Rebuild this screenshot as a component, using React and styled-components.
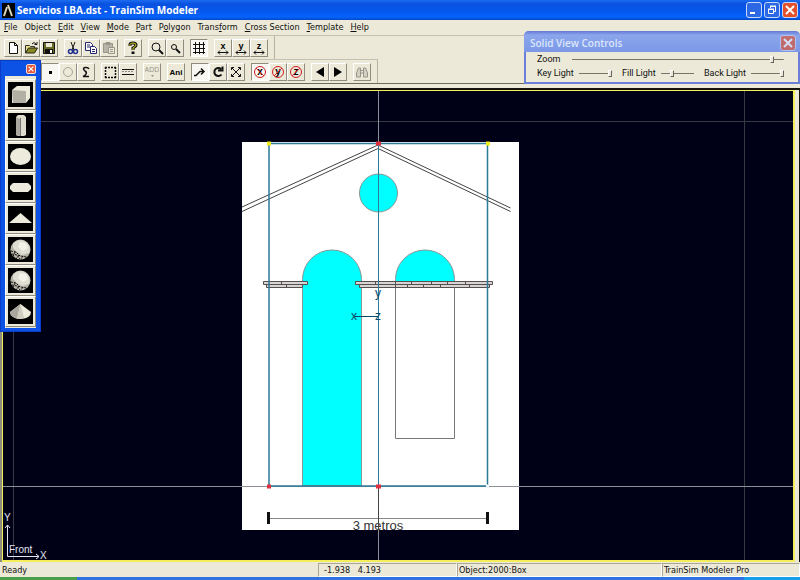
import React, { useState } from 'react';
import styled, { createGlobalStyle, css } from 'styled-components';

const GlobalStyle = createGlobalStyle`
	* {
		box-sizing: border-box;
	}

	body {
		margin: 0;
		background: #ece9d8;
		color: #111;
		font-family: 'DejaVu Sans Condensed', 'Liberation Sans', sans-serif;
		font-size: 9px;
		line-height: 12px;
	}

	button,
	input {
		margin: 0;
		padding: 0;
		border: 0;
		color: inherit;
		font: inherit;
	}
`;

const Window = styled.div`
	position: relative;
	display: flex;
	flex-direction: column;
	min-height: 100vh;
	overflow: hidden;
`;

const TitleBar = styled.header`
	display: flex;
	align-items: center;
	gap: 2px;
	height: 20px;
	padding: 0 2px;
	background: linear-gradient(to bottom, #1c6cf0, #0a52e0 20%, #0558ee 60%, #0564fb 85%, #0346c8);
`;

const WindowTitle = styled.h1`
	flex: 1;
	margin: 0;
	color: #ffffff;
	font-family: 'Open Sans', 'Liberation Sans', sans-serif;
	font-size: 10px;
	font-weight: 700;
	line-height: 16px;
	white-space: nowrap;
`;

const WindowButton = styled.button`
	display: flex;
	align-items: center;
	justify-content: center;
	width: 16px;
	height: 16px;
	border: 1px solid #c8d8f8;
	border-radius: 3px;
	background: ${props => (props.$close ? '#e2502c' : '#2c68e4')};
	opacity: ${props => (props.$faded ? 0.65 : 1)};
`;

const MenuBar = styled.nav`
	display: flex;
	gap: 7px;
	height: 16px;
	padding: 0 4px;
	border-bottom: 1px solid #c4c1b2;
`;

const MenuItem = styled.button`
	background: none;
	line-height: 15px;
	white-space: nowrap;
`;

const ToolBars = styled.div`
	display: flex;
	flex-direction: column;
	align-items: flex-start;
	border-bottom: 1px solid #6d6a5e;
`;

const ToolBar = styled.div`
	display: flex;
	align-items: center;
	gap: 6px;
	height: ${props => (props.$indent ? '24px' : '23px')};
	padding: 0 6px 0 ${props => (props.$indent ? '41px' : '4px')};
	border-top: ${props => (props.$indent ? '1px solid #c4c1b2' : '0')};
	border-right: 1px solid #b5b2a2;
`;

const ToolGroup = styled.div`
	display: flex;
`;

const ToolButton = styled.button`
	display: flex;
	align-items: center;
	justify-content: center;
	width: 18px;
	height: 18px;
	border: 1px solid;
	border-color: #ffffff #8f8c7e #8f8c7e #ffffff;
	background: #ece9d8;

	${props =>
		props.$pressed &&
		css`
			border-color: #8f8c7e #ffffff #ffffff #8f8c7e;
			background: #f8f7f2;
		`}
`;

const Workspace = styled.main`
	display: flex;
	flex: 1;
	margin-top: 4px;
	padding-right: 4px;
	border-top: 2px solid #15130c;
	border-left: 2px solid #8f8c7e;
	border-right: 1px solid #15130c;
`;

const Viewport = styled.div`
	position: relative;
	flex: 1;
	border: 2px solid #f4ee5c;
	border-width: 1px 2px 2px 1px;
	background: #000017;
`;

const Scene = styled.svg`
	position: absolute;
	inset: 0;
	width: 100%;
	height: 100%;
	font-family: 'Liberation Sans', sans-serif;
`;

const Palette = styled.aside`
	position: absolute;
	top: 60px;
	left: 0;
	padding: 0 4px 3px;
	border: 1px solid #0a3cc8;
	background: #0c52e4;
`;

const PaletteTitle = styled.div`
	display: flex;
	justify-content: flex-end;
	padding: 3px 0 2px;
`;

const PaletteClose = styled.button`
	display: flex;
	align-items: center;
	justify-content: center;
	width: 10px;
	height: 10px;
	border: 1px solid #f4dcd8;
	border-radius: 2px;
	background: #e0583c;
`;

const PaletteTools = styled.div`
	padding: 3px 0 1px;
	background: #ece9d8;
`;

const ShapeButton = styled.button`
	display: block;
	width: 31px;
	height: 31px;
	padding: 2px;
	border: 1px solid;
	border-color: #ffffff #8f8c7e #8f8c7e #ffffff;
	background: #ece9d8;

	svg {
		display: block;
		background: #000000;
	}
`;

const Dialog = styled.section`
	position: absolute;
	top: 31px;
	right: 0;
	width: 276px;
	height: 53px;
	border: 2px solid #6b7fd8;
	border-top: 0;
	border-radius: 5px 5px 0 0;
	background: #ece9d8;
	font-family: Roboto, 'Liberation Sans', sans-serif;
`;

const DialogTitle = styled.div`
	display: flex;
	align-items: center;
	justify-content: space-between;
	height: 21px;
	margin: 0 -2px;
	padding: 2px 4px 0 6px;
	border-radius: 5px 5px 0 0;
	background: linear-gradient(to bottom, #6378d4, #8ba6ec 20%, #7c98e6);
`;

const DialogHeading = styled.h2`
	margin: 0;
	color: #dce6fc;
	font-family: 'Open Sans', sans-serif;
	font-size: 10px;
	font-weight: 600;
`;

const DialogRow = styled.div`
	display: flex;
	align-items: center;
	justify-content: space-between;
	height: 14px;
	padding: 0 14px 0 11px;
`;

const SliderLabel = styled.label`
	display: flex;
	flex: ${props => (props.$fill ? '1' : 'none')};
	align-items: center;
	gap: ${props => (props.$fill ? '12px' : '5px')};
	white-space: nowrap;
`;

const Slider = styled.input`
	flex: ${props => (props.$fill ? '1' : 'none')};
	width: 33px;
	height: 9px;
	appearance: none;
	background: linear-gradient(#77756a, #77756a) center / 100% 1px no-repeat;

	&::-webkit-slider-thumb {
		width: 4px;
		height: 7px;
		appearance: none;
		border: 1px solid;
		border-color: #ffffff #66645a #66645a #ffffff;
		background: #ece9d8;
	}
`;

const StatusBar = styled.footer`
	display: grid;
	grid-template-columns: 318fr 139fr 205fr 138fr;
	height: 15px;
	padding-top: 1px;
`;

const StatusPane = styled.div`
	padding-left: ${props => (props.$coords ? '5px' : '1px')};
	border: 1px solid;
	border-color: ${props => (props.$flat ? 'transparent' : '#aaa797 #ffffff #ffffff #aaa797')};
	white-space: pre;
`;

const TaskBar = styled.div`
	height: 3px;
	background: linear-gradient(to right, #4aa04a 77px, #2f72e0 77px 93%, #18a0ee 93%);
`;

const Hotkey = styled.span`
	text-decoration: underline;
`;

// menu captions, with the position of the underlined letter
const menus = [
	['File', 0],
	['Object', -1],
	['Edit', 0],
	['View', 0],
	['Mode', 0],
	['Part', 0],
	['Polygon', 1],
	['Transform', 5],
	['Cross Section', 0],
	['Template', 0],
	['Help', 0]
];

const axisIcon = letter => (
	<>
		<text x="7" y="8" textAnchor="middle" fontSize="9" fontWeight="700">{letter}</text>
		<path d="M2 11.500h10M4 9.500l-2 2 2 2M10 9.500l2 2-2 2" fill="none" stroke="#111" />
	</>
);

const lockIcon = letter => (
	<>
		<text x="7" y="10" textAnchor="middle" fontSize="10" fontWeight="700">{letter}</text>
		<g fill="none" stroke="#d01c24">
			<circle cx="7" cy="7" r="5.500" />
			<path d={letter === 'x' ? 'M3 3l8 8' : 'M3 11l8-8'} />
		</g>
	</>
);

const icons = {
	new: <path d="M3.500 1.500h5l3 3v8h-8zM8.500 1.500v3h3" fill="#fff" stroke="#111" />,
	open: (
		<>
			<path d="M1.500 12V4.500h4l1 1h4V7" fill="#e8e080" stroke="#333" />
			<path d="M1.500 12l3-5h9l-3 5z" fill="#8a8a20" stroke="#222" />
			<path d="M8 3q2-3 4 0m1-2v2.500h-2.500" fill="none" stroke="#111" />
		</>
	),
	save: (
		<>
			<path d="M1.500 1.500h11v11h-11z" fill="#6a6a28" stroke="#111" />
			<path d="M4 2h6v4H4z" fill="#ece9d8" />
			<path d="M3 8h8v4H3z" fill="#111" />
			<path d="M8 9h2v3H8z" fill="#fff" />
		</>
	),
	cut: (
		<>
			<path d="M5 1l3 8M9 1L6 9" fill="none" stroke="#111" />
			<g fill="none" stroke="#20308c" strokeWidth="1.500">
				<circle cx="4.500" cy="10.500" r="2" />
				<circle cx="9.500" cy="10.500" r="2" />
			</g>
		</>
	),
	copy: (
		<g fill="#fff" stroke="#24246c">
			<path d="M1.500 1.500h5l2 2v6h-7zM3 4h3M3 6h3" />
			<path d="M6.500 5.500h4l2 2v5h-6zM8 8.500h3M8 10.500h3" />
		</g>
	),
	paste: (
		<g fill="#b8b5a8" stroke="#98958a">
			<path d="M1.500 2.500h9v9h-9zM4 1.500h4v2H4z" />
			<path d="M6.500 6.500h6v6h-6zM8 8.500h3M8 10.500h3" fill="#ece9d8" />
		</g>
	),
	help: (
		<>
			<path d="M4 5V3.500Q4 2 7 2t3 2q0 1.500-3 3v2" fill="none" stroke="#111" strokeWidth="3" />
			<path d="M4 5V3.500Q4 2 7 2t3 2q0 1.500-3 3v2" fill="none" stroke="#d8d020" />
			<path d="M5.500 10.500h3v2.500h-3z" fill="#111" />
		</>
	),
	zoomIn: (
		<>
			<circle cx="6" cy="6" r="4" fill="none" stroke="#111" />
			<path d="M9 9l4 4" stroke="#111" strokeWidth="2" />
		</>
	),
	zoomOut: (
		<>
			<circle cx="6" cy="6" r="2.500" fill="none" stroke="#111" />
			<path d="M8 8l4 4" stroke="#111" strokeWidth="2" />
		</>
	),
	grid: <path d="M3.500 1v12M7.500 1v12M11.500 1v12M1 3.500h12M1 7.500h12M1 11.500h12" stroke="#111" />,
	dot: <path d="M6 6h3v3H6z" />,
	circle: <circle cx="7" cy="7" r="4.500" fill="none" stroke="#aaa79a" />,
	curve: <path d="M10 4Q9 2 6 2.500T6 6q2 1 1 3t-3 2.500h6" fill="none" stroke="#111" strokeWidth="1.500" />,
	select: (
		<path d="M2 2.500h11M2 12.500h11M2.500 2v11M12.500 2v11" stroke="#111" strokeWidth="1.500" strokeDasharray="2 1" />
	),
	lines: (
		<>
			<path d="M1 4.500h12M1 9.500h12" stroke="#111" />
			<path d="M1 6.500h12" stroke="#8f8c7e" strokeDasharray="2 1" />
		</>
	),
	add: (
		<>
			<text x="7" y="7" textAnchor="middle" fontSize="7" fill="#98958a">ADD</text>
			<path d="M6 10h3l-1.500 2z" fill="#98958a" />
		</>
	),
	ani: <text x="7" y="10" textAnchor="middle" fontSize="8" fontWeight="700">Ani</text>,
	move: <path d="M1 10.500h2l4-4h4M8 3.500l3 3-3 3" fill="none" stroke="#111" strokeWidth="1.500" />,
	rotate: <path d="M10.500 9.500A4 4 0 1 1 10 4M7 5.500h4.500V1.500" fill="none" stroke="#111" strokeWidth="2" />,
	scale: (
		<path d="M3 3l8 8M11 3l-8 8M2.500 5V2.500H5M9 2.500h2.500V5M11.500 9v2.500H9M5 11.500H2.500V9" fill="none" stroke="#111" />
	),
	prev: <path d="M11 2v10L3 7z" />,
	next: <path d="M3 2v10l8-5z" />,
	find: (
		<path d="M1.500 12V8l2-5h2v9zM8.500 12V3h2l2 5v4zM5.500 5.500h3M5.500 8h3" fill="#d4d1c4" stroke="#98958a" />
	)
};

const Icon = ({ children }) => (
	<svg width="14" height="14" viewBox="0 0 14 14" fontFamily="Liberation Sans, sans-serif" aria-hidden="true">
		{children}
	</svg>
);

const tool = (label, icon, pressed = false) => ({ label, icon, pressed });

const fileTools = [
	[tool('New', icons.new), tool('Open', icons.open), tool('Save', icons.save)],
	[tool('Cut', icons.cut), tool('Copy', icons.copy), tool('Paste', icons.paste)],
	[tool('Help', icons.help)],
	[tool('Zoom in', icons.zoomIn), tool('Zoom out', icons.zoomOut)],
	[tool('Grid', icons.grid, true)],
	[tool('Mirror x', axisIcon('x')), tool('Mirror y', axisIcon('y')), tool('Mirror z', axisIcon('z'))]
];

const editTools = [
	[tool('Point', icons.dot, true), tool('Circle', icons.circle), tool('Curve', icons.curve)],
	[tool('Select', icons.select), tool('Lines', icons.lines)],
	[tool('Add', icons.add)],
	[tool('Animate', icons.ani)],
	[tool('Move', icons.move, true), tool('Rotate', icons.rotate), tool('Scale', icons.scale)],
	[tool('Lock x', lockIcon('x'), true), tool('Lock y', lockIcon('y')), tool('Lock z', lockIcon('z'))],
	[tool('Previous', icons.prev), tool('Next', icons.next)],
	[tool('Find', icons.find)]
];

const ball = (
	<>
		<circle cx="12.500" cy="12.500" r="10" fill="#b8b5a8" />
		<path d="M5 7q6-7 13-2 6 5 3 11l-7 2-5-3-4-4z" fill="#deded2" />
		<path d="M12 5l6 1 2 5-5 3-5-4z" fill="#f4f3e8" />
		<path d="M3 14l5 1 4 4 7 1M4 17l5 1 3 4M7 15l-2 5M11 18l-3 4M15 19l-2 3" fill="none" stroke="#111" strokeDasharray="2 1" />
	</>
);

const shapes = [
	[
		'Box',
		<>
			<path d="M4 8l5-4h13v12l-4 5H4z" fill="#ecebdc" />
			<path d="M4 8l14 1v12H5z" fill="#b2b0a5" />
		</>
	],
	[
		'Cylinder',
		<>
			<path d="M8 4l2-2h6l2 2v18l-2 1h-6l-2-1z" fill="#dddccd" />
			<path d="M8 4l4 2v17l-4-1z" fill="#aaa89e" />
			<path d="M12.500 5v18" stroke="#777" />
		</>
	],
	['Disc', <ellipse cx="12.500" cy="12.500" rx="10.500" ry="8.500" fill="#ecebdc" />],
	['Capsule', <path d="M5 8h15l3 3v3l-3 3H5l-3-3v-3z" fill="#ecebdc" />],
	['Triangle', <path d="M1 17L12.500 7 24 17z" fill="#ecebdc" />],
	['Sphere', ball],
	['Geosphere', ball],
	[
		'Cone',
		<>
			<path d="M12.500 5L23 13q0 6-10 7-11-1-11-7z" fill="#ecebdc" />
			<path d="M12.500 5L2 13q1 5 7 7z" fill="#aaa89e" />
			<path d="M12.500 5L9 20l7-1z" fill="#cfcdc0" />
		</>
	]
];

const Cross = ({ size }) => (
	<svg width={size} height={size} viewBox="0 0 10 10" aria-hidden="true">
		<path d="M1 1l8 8M9 1L1 9" stroke="#ffffff" strokeWidth="2" />
	</svg>
);

const Tools = ({ groups, indent }) => (
	<ToolBar $indent={indent}>
		{groups.map((group, index) => (
			<ToolGroup key={index}>
				{group.map(({ label, icon, pressed }) => (
					<ToolButton key={label} type="button" aria-label={label} $pressed={pressed}>
						<Icon>{icon}</Icon>
					</ToolButton>
				))}
			</ToolGroup>
		))}
	</ToolBar>
);

const LightSlider = ({ label, initial, fill }) => {
	const [value, setValue] = useState(initial);

	return (
		<SliderLabel $fill={fill}>
			{label}
			<Slider type="range" $fill={fill} value={value} onChange={event => setValue(event.target.value)} />
		</SliderLabel>
	);
};

const FrontView = () => (
	<Scene viewBox="3 91 790 469" preserveAspectRatio="xMidYMid slice" role="img" aria-label="Front view">
		<path d="M13.500 0v700M744.500 0v700M0 121.500h800" stroke="#353a44" />

		<rect x="242" y="142" width="277" height="388" fill="#ffffff" />

		{/* roof */}
		<path d="M242 207l136-62 132.500 63M242 211.500l136-63 132.500 63" fill="none" stroke="#444" />

		{/* openings */}
		<g fill="#00ffff" stroke="#8a9696">
			<circle cx="378.500" cy="193" r="19" />
			<path d="M302.500 485.500V279.500a29.500 29.500 0 0 1 59 0v206z" />
			<path d="M395.500 282V279.500a29.500 29.500 0 0 1 59 0V282z" />
			<path d="M395.500 287v151.500h59V287" fill="none" stroke="#777" />
		</g>

		{/* brick ledge */}
		<g fill="#d8d4d4" stroke="#554f4f">
			<path d="M263.500 281.500h44v3h-44zM355.500 281.500h137v3h-137zM266.500 284.500h36v3h-36zM359.500 284.500h130v3h-130z" />
			<path d="M281.500 282v3M286.500 285v3M375.500 282v3M395.500 282v6M411.500 282v3M431.500 282v3M447.500 282v3M465.500 282v3M407.500 285v3M423.500 285v3M440.500 285v3M469.500 285v3" />
		</g>

		{/* scale bar */}
		<path d="M269 518.500h218" stroke="#888" />
		<path d="M268.500 512v12M487.500 512v12" stroke="#111" strokeWidth="3" />
		<text x="378" y="530" textAnchor="middle" fontSize="13" fill="#333">3 metros</text>

		{/* axes through the origin */}
		<path d="M0 486.500h800M378.500 530v40M378.500 88v55" stroke="#8a8f98" />
		<path d="M378.500 486v44" stroke="#444" />

		{/* selected box */}
		<path d="M269 143.500h218.500V486H269z" fill="none" stroke="#2b7a96" strokeWidth="1.500" />
		<path d="M378.500 143.500V486" stroke="#2b7a96" />
		<path d="M267 141.500h4v4h-4zM486 141.500h4v4h-4z" fill="#f0f020" />
		<path d="M376 141.500h5v4h-5zM267 484.500h4v4h-4zM376 484.500h5v4h-5z" fill="#e03040" />
		<path d="M486 484.500h3v4h-3z" fill="#eef6fa" />
		<path d="M354 316.500h24" stroke="#0a4a68" />
		<g fill="#0a4a68" fontSize="12" textAnchor="middle">
			<text x="378" y="297">y</text>
			<text x="354" y="320">x</text>
			<text x="378" y="320">z</text>
		</g>

		{/* orientation mark */}
		<path d="M7.500 525v31.500H39M5 528l2.500-3 2.500 3M36 554l3 2.500-3 2.500" fill="none" stroke="#e4e6f0" />
		<g fill="#e4e6f0" fontSize="10">
			<text x="4" y="521">Y</text>
			<text x="9" y="553">Front</text>
			<text x="40" y="559">X</text>
		</g>
	</Scene>
);

const App = () => (
	<Window>
		<GlobalStyle />
		<TitleBar>
			<svg width="13" height="15" viewBox="0 0 13 15" aria-hidden="true">
				<path d="M0 0h13v15H0z" />
				<path d="M2 13l3-9M6 2l4 11" fill="none" stroke="#d8d4b8" strokeWidth="2" />
			</svg>
			<WindowTitle>Servicios LBA.dst - TrainSim Modeler</WindowTitle>
			<WindowButton type="button" aria-label="Minimize">
				<svg width="10" height="10"><path d="M1 7h5v2H1z" fill="#fff" /></svg>
			</WindowButton>
			<WindowButton type="button" aria-label="Restore">
				<svg width="10" height="10">
					<path d="M3.500 3V1.500h5v5H7M1.500 4.500h5v4h-5zM1 4h6M3 1h6" fill="none" stroke="#fff" />
				</svg>
			</WindowButton>
			<WindowButton type="button" aria-label="Close" $close>
				<Cross size={10} />
			</WindowButton>
		</TitleBar>

		<MenuBar>
			{menus.map(([name, key]) => (
				<MenuItem key={name} type="button">
					{key < 0 ? (
						name
					) : (
						<>
							{name.slice(0, key)}
							<Hotkey>{name[key]}</Hotkey>
							{name.slice(key + 1)}
						</>
					)}
				</MenuItem>
			))}
		</MenuBar>

		<ToolBars>
			<Tools groups={fileTools} />
			<Tools groups={editTools} indent />
		</ToolBars>

		<Workspace>
			<Viewport>
				<FrontView />
			</Viewport>
		</Workspace>

		<StatusBar>
			<StatusPane $flat>Ready</StatusPane>
			<StatusPane $coords>-1.938{'   '}4.193</StatusPane>
			<StatusPane>Object:2000:Box</StatusPane>
			<StatusPane>TrainSim Modeler Pro</StatusPane>
		</StatusBar>
		<TaskBar />

		<Palette>
			<PaletteTitle>
				<PaletteClose type="button" aria-label="Close palette">
					<Cross size={6} />
				</PaletteClose>
			</PaletteTitle>
			<PaletteTools>
				{shapes.map(([name, drawing]) => (
					<ShapeButton key={name} type="button" aria-label={name}>
						<svg width="25" height="25" viewBox="0 0 25 25" aria-hidden="true">{drawing}</svg>
					</ShapeButton>
				))}
			</PaletteTools>
		</Palette>

		<Dialog>
			<DialogTitle>
				<DialogHeading>Solid View Controls</DialogHeading>
				<WindowButton type="button" aria-label="Close controls" $close $faded>
					<Cross size={10} />
				</WindowButton>
			</DialogTitle>
			<DialogRow>
				<LightSlider label="Zoom" initial={95} fill />
			</DialogRow>
			<DialogRow>
				<LightSlider label="Key Light" initial={100} />
				<LightSlider label="Fill Light" initial={33} />
				<LightSlider label="Back Light" initial={100} />
			</DialogRow>
		</Dialog>
	</Window>
);

export default App;
